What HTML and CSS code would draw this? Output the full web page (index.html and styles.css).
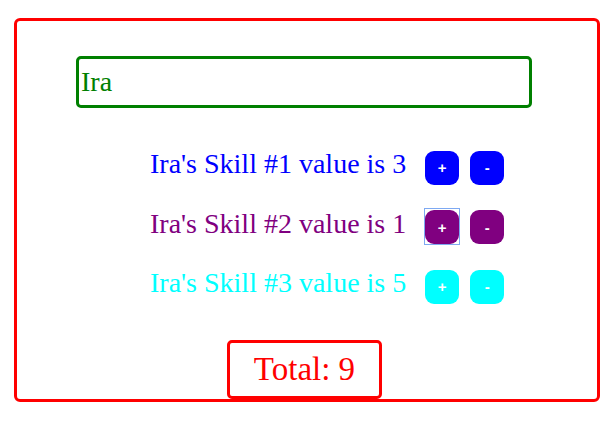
FILE: index.html
```html
<!DOCTYPE html>
<html>
<head>
<meta charset="utf-8">
<link rel="stylesheet" href="styles.css">
</head>
<body>
<div class="app">
  <input class="name-input" type="text" value="Ira">
  <div class="skills">
    <div class="skill skill-blue">
      <span class="skill-label">Ira's Skill #1 value is 3</span>
      <button class="btn">+</button>
      <button class="btn">-</button>
    </div>
    <div class="skill skill-purple">
      <span class="skill-label">Ira's Skill #2 value is 1</span>
      <button class="btn btn-focused">+</button>
      <button class="btn">-</button>
    </div>
    <div class="skill skill-cyan">
      <span class="skill-label">Ira's Skill #3 value is 5</span>
      <button class="btn">+</button>
      <button class="btn">-</button>
    </div>
  </div>
  <div class="total">Total: 9</div>
</div>
</body>
</html>
```

FILE: styles.css
```css
html, body {
  margin: 0;
  padding: 0;
  background: #ffffff;
}

.app {
  box-sizing: border-box;
  width: 586px;
  margin: 18px 0 0 14px;
  padding: 35px 0 0 0;
  border: 3px solid #ff0000;
  border-radius: 6px;
  font-family: "Liberation Serif", "Times New Roman", serif;
}

.name-input {
  display: block;
  box-sizing: border-box;
  width: 456px;
  height: 52px;
  margin: 0 0 0 59px;
  padding: 0 2px;
  border: 3px solid #008000;
  border-radius: 5px;
  font-family: "Liberation Serif", "Times New Roman", serif;
  font-size: 28px;
  color: #008000;
  background: #ffffff;
  outline: none;
}

.skills {
  display: flex;
  flex-direction: column;
  gap: 22.5px;
  margin-top: 40px;
  padding-left: 133px;
}

.skill {
  display: flex;
  align-items: baseline;
  height: 37px;
}

.skill-label {
  font-size: 28px;
  line-height: normal;
  margin-right: 19px;
}

.btn {
  position: relative;
  box-sizing: border-box;
  width: 34px;
  height: 34px;
  padding: 0;
  margin-right: 11px;
  border: none;
  border-radius: 9px;
  color: #ffffff;
  font-family: "Liberation Sans", Arial, sans-serif;
  font-weight: bold;
  font-size: 15px;
}

.skill-blue { color: #0000ff; }
.skill-blue .btn { background: #0000ff; }
.skill-purple { color: #800080; }
.skill-purple .btn { background: #800080; }
.skill-cyan { color: #00ffff; }
.skill-cyan .btn { background: #00ffff; }

.btn-focused::after {
  content: "";
  position: absolute;
  top: -2px;
  left: -1px;
  right: -1px;
  bottom: -1px;
  border: 1px solid #7ea9f2;
}

.total {
  box-sizing: border-box;
  width: 155px;
  margin: 36px 0 0 210px;
  padding: 8px 0;
  border: 3px solid #ff0000;
  border-radius: 5px;
  text-align: center;
  font-size: 33px;
  line-height: normal;
  color: #ff0000;
}
```
